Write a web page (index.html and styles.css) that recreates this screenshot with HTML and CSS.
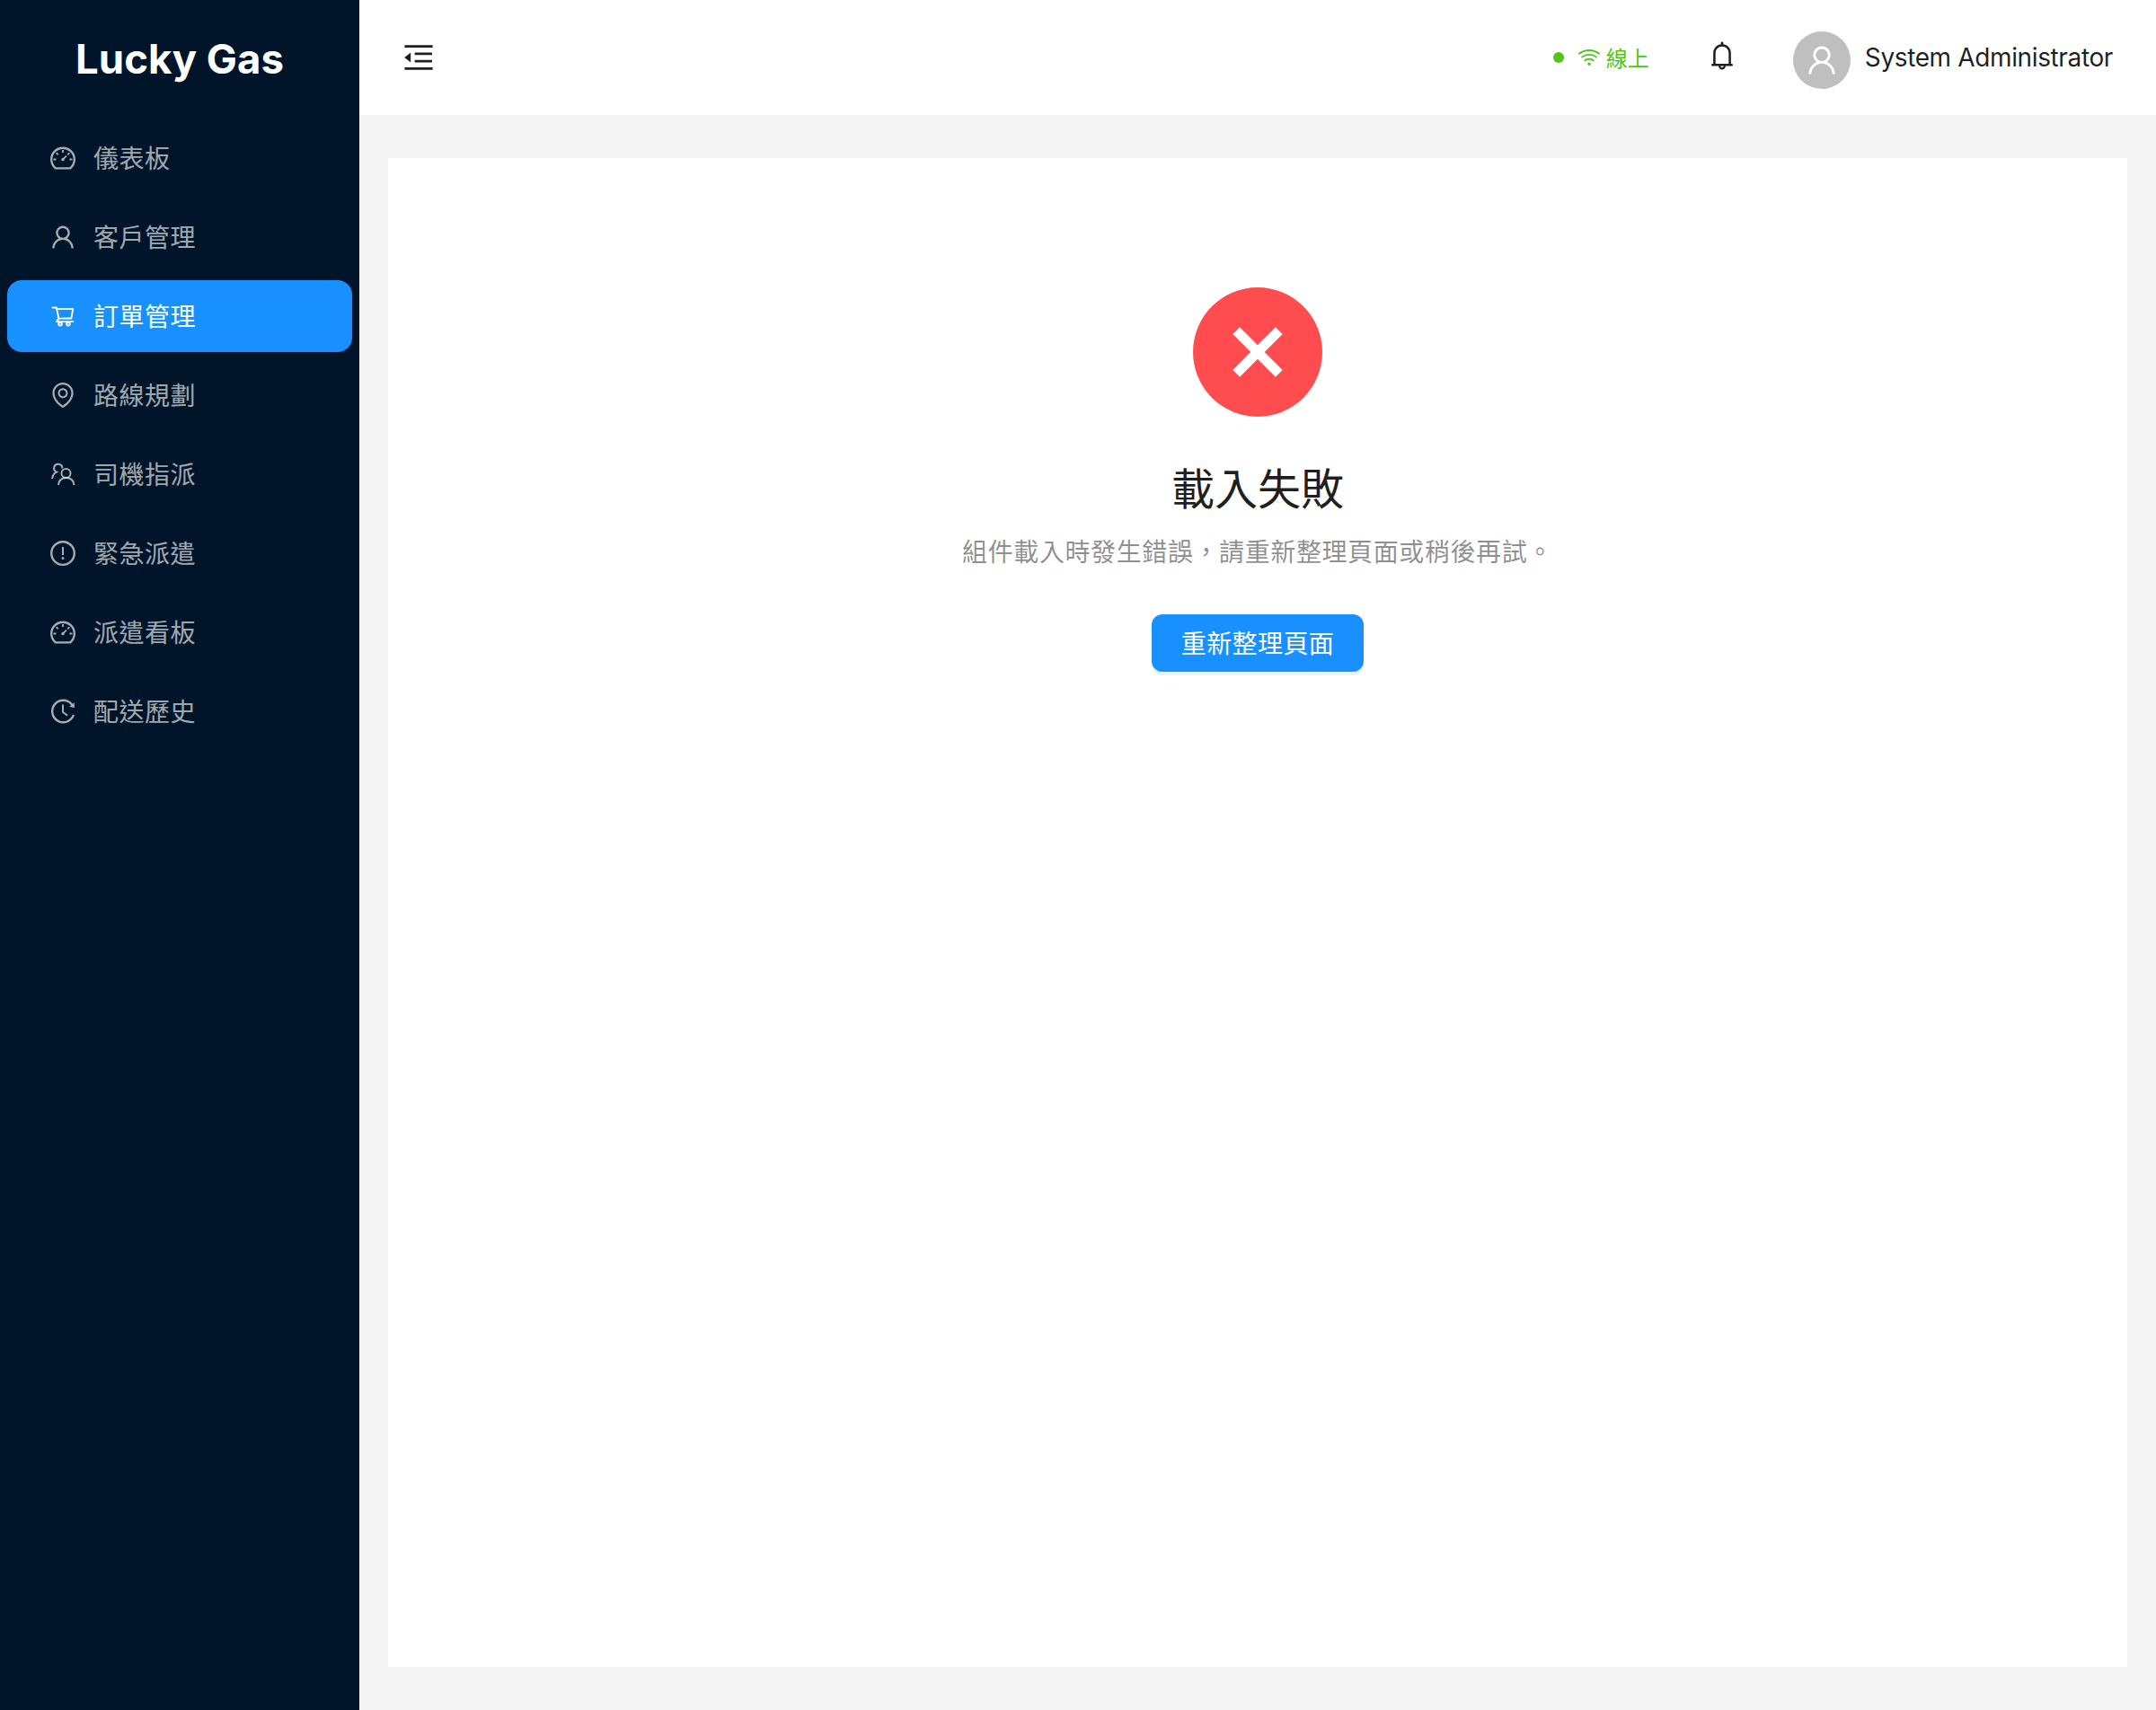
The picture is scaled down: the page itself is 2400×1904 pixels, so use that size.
FILE: index.html
```html
<!DOCTYPE html>
<html lang="zh-Hant">
<head>
    <meta charset="UTF-8">
    <meta name="viewport" content="width=device-width, initial-scale=1.0">
    <title>Lucky Gas</title>
    <link rel="stylesheet" href="styles.css">
</head>
<body>
    <div class="layout">
        <aside class="sider">
            <div class="logo">Lucky Gas</div>
            <nav class="menu">
                <a class="menu-item">
                    <svg class="menu-icon" viewBox="0 0 1024 1024"><path d="M924.8 385.6a446.7 446.7 0 0 0-96-142.4 446.7 446.7 0 0 0-142.4-96C631.1 123.8 572.5 112 512 112s-119.1 11.8-174.4 35.2a446.7 446.7 0 0 0-142.4 96 446.7 446.7 0 0 0-96 142.4C75.8 440.9 64 499.5 64 560c0 132.7 58.3 257.7 159.9 343.1l1.7 1.4c5.8 4.8 13.1 7.5 20.6 7.5h531.7c7.5 0 14.8-2.7 20.6-7.5l1.7-1.4C901.7 817.7 960 692.7 960 560c0-60.5-11.9-119.1-35.2-174.4zM761.4 836H262.6A371.12 371.12 0 0 1 140 560c0-99.4 38.7-192.8 109-263 70.3-70.3 163.7-109 263-109 99.4 0 192.8 38.7 263 109 70.3 70.3 109 163.7 109 263 0 105.6-44.5 205.5-122.6 276zM623.5 421.5a8.03 8.03 0 0 0-11.3 0L527.7 506c-18.7-5-39.4-.2-54.1 14.5a55.95 55.95 0 0 0 0 79.2 55.95 55.95 0 0 0 79.2 0 55.87 55.87 0 0 0 14.5-54.1l84.5-84.5c3.1-3.1 3.1-8.2 0-11.3l-28.3-28.3zM490 320h44c4.4 0 8-3.6 8-8v-80c0-4.4-3.6-8-8-8h-44c-4.4 0-8 3.6-8 8v80c0 4.4 3.6 8 8 8zm260 218v44c0 4.4 3.6 8 8 8h80c4.4 0 8-3.6 8-8v-44c0-4.4-3.6-8-8-8h-80c-4.4 0-8 3.6-8 8zm12.7-197.2l-31.1-31.1a8.03 8.03 0 0 0-11.3 0l-56.6 56.6a8.03 8.03 0 0 0 0 11.3l31.1 31.1c3.1 3.1 8.2 3.1 11.3 0l56.6-56.6c3.1-3.1 3.1-8.2 0-11.3zm-458.6-31.1a8.03 8.03 0 0 0-11.3 0l-31.1 31.1a8.03 8.03 0 0 0 0 11.3l56.6 56.6c3.1 3.1 8.2 3.1 11.3 0l31.1-31.1c3.1-3.1 3.1-8.2 0-11.3l-56.6-56.6zM262 530h-80c-4.4 0-8 3.6-8 8v44c0 4.4 3.6 8 8 8h80c4.4 0 8-3.6 8-8v-44c0-4.4-3.6-8-8-8z"/></svg>
                    <span class="menu-label">儀表板</span>
                </a>
                <a class="menu-item">
                    <svg class="menu-icon" viewBox="0 0 1024 1024"><path d="M858.5 763.6a374 374 0 0 0-80.6-119.5 375.63 375.63 0 0 0-119.5-80.6c-.4-.2-.8-.3-1.2-.5C719.5 518 760 444.7 760 362c0-137-111-248-248-248S264 225 264 362c0 82.7 40.5 156 102.8 201.1-.4.2-.8.3-1.2.5-44.8 18.9-85 46-119.5 80.6a375.63 375.63 0 0 0-80.6 119.5A371.7 371.7 0 0 0 136 901.8a8 8 0 0 0 8 8.2h60c4.4 0 7.9-3.5 8-7.8 2-77.2 33-149.5 87.8-204.3 56.7-56.7 132-87.9 212.2-87.9s155.5 31.2 212.2 87.9C779 752.7 810 825 812 902.2c.1 4.4 3.6 7.8 8 7.8h60a8 8 0 0 0 8-8.2c-1-47.8-10.9-94.3-29.5-138.2zM512 534c-45.9 0-89.1-17.9-121.6-50.4S340 407.9 340 362c0-45.9 17.9-89.1 50.4-121.6S466.1 190 512 190s89.1 17.9 121.6 50.4S684 316.1 684 362c0 45.9-17.9 89.1-50.4 121.6S557.9 534 512 534z"/></svg>
                    <span class="menu-label">客戶管理</span>
                </a>
                <a class="menu-item active">
                    <svg class="menu-icon cart-icon" viewBox="0 0 1024 1024"><path d="M922.9 701.9H327.4l29.9-60.9 496.8-.9c16.8 0 31.2-12 34.2-28.6l68.8-385.1c1.8-10.1-.9-20.5-7.5-28.4a34.99 34.99 0 0 0-26.6-12.5l-632-2.1-5.4-25.4c-3.4-16.2-18-28-34.6-28H96.5a35.3 35.3 0 1 0 0 70.6h125.9L246 312.8l58.1 281.3-74.8 122.1a34.96 34.96 0 0 0-3 36.8c6 11.9 18.1 19.4 31.5 19.4h62.8a102.43 102.43 0 0 0-20.6 61.7c0 56.6 46 102.6 102.6 102.6s102.6-46 102.6-102.6c0-22.3-7.4-44-20.6-61.7h161.1a102.43 102.43 0 0 0-20.6 61.7c0 56.6 46 102.6 102.6 102.6s102.6-46 102.6-102.6c0-22.3-7.4-44-20.6-61.7H923c19.4 0 35.3-15.8 35.3-35.3a35.42 35.42 0 0 0-35.4-35.2zM305.7 253l575.8 1.9-56.4 315.8-452.3.8L305.7 253zm96.9 612.7c-17.4 0-31.6-14.2-31.6-31.6 0-17.4 14.2-31.6 31.6-31.6s31.6 14.2 31.6 31.6a31.6 31.6 0 0 1-31.6 31.6zm325.1 0c-17.4 0-31.6-14.2-31.6-31.6 0-17.4 14.2-31.6 31.6-31.6s31.6 14.2 31.6 31.6a31.6 31.6 0 0 1-31.6 31.6z"/></svg>
                    <span class="menu-label">訂單管理</span>
                </a>
                <a class="menu-item">
                    <svg class="menu-icon" viewBox="0 0 1024 1024"><path d="M854.6 289.1a362.49 362.49 0 0 0-79.9-115.7 370.83 370.83 0 0 0-118.2-77.8C610.7 76.6 562.1 67 512 67c-50.1 0-98.7 9.6-144.5 28.5-44.3 18.3-84 44.5-118.2 77.8A363.6 363.6 0 0 0 169.4 289c-19.5 45-29.4 92.8-29.4 142 0 70.6 16.9 140.9 50.1 208.7 26.7 54.5 64 107.6 111 158.1 80.3 86.2 164.5 138.9 188.4 153a43.9 43.9 0 0 0 22.4 6.1c7.8 0 15.5-2 22.4-6.1 23.9-14.1 108.1-66.8 188.4-153 47-50.4 84.3-103.6 111-158.1C867.1 572 884 501.8 884 431.1c0-49.2-9.9-97-29.4-142zM512 880.2c-65.9-41.9-300-207.8-300-449.1 0-77.9 31.1-151.1 87.6-206.3C356.3 169.5 431.7 139 512 139s155.7 30.5 212.4 85.9C780.9 280 812 353.2 812 431.1c0 241.3-234.1 407.2-300 449.1zm0-617.2c-97.2 0-176 78.8-176 176s78.8 176 176 176 176-78.8 176-176-78.8-176-176-176zm79.2 255.2A111.6 111.6 0 0 1 512 551c-29.9 0-58-11.7-79.2-32.8A111.6 111.6 0 0 1 400 439c0-29.9 11.7-58 32.8-79.2C454 338.6 482.1 327 512 327c29.9 0 58 11.6 79.2 32.8C612.4 381 624 409.1 624 439c0 29.9-11.6 58-32.8 79.2z"/></svg>
                    <span class="menu-label">路線規劃</span>
                </a>
                <a class="menu-item">
                    <svg class="menu-icon team-icon" viewBox="0 0 32 32"><circle cx="19.5" cy="15" r="5"/><path d="M11 28c0-5 3.8-8 8.7-8s8.7 3 8.7 8"/><path d="M15.3 9.5A4.6 4.6 0 1 0 9 13.6C6.4 14.8 4.4 17.6 4 21"/></svg>
                    <span class="menu-label">司機指派</span>
                </a>
                <a class="menu-item">
                    <svg class="menu-icon" viewBox="0 0 1024 1024"><path d="M512 64C264.6 64 64 264.6 64 512s200.6 448 448 448 448-200.6 448-448S759.4 64 512 64zm0 820c-205.4 0-372-166.6-372-372s166.6-372 372-372 372 166.6 372 372-166.6 372-372 372z"/><path d="M464 688a48 48 0 1 0 96 0 48 48 0 1 0-96 0zm24-112h48c4.4 0 8-3.6 8-8V296c0-4.4-3.6-8-8-8h-48c-4.4 0-8 3.6-8 8v272c0 4.4 3.6 8 8 8z"/></svg>
                    <span class="menu-label">緊急派遣</span>
                </a>
                <a class="menu-item">
                    <svg class="menu-icon" viewBox="0 0 1024 1024"><path d="M924.8 385.6a446.7 446.7 0 0 0-96-142.4 446.7 446.7 0 0 0-142.4-96C631.1 123.8 572.5 112 512 112s-119.1 11.8-174.4 35.2a446.7 446.7 0 0 0-142.4 96 446.7 446.7 0 0 0-96 142.4C75.8 440.9 64 499.5 64 560c0 132.7 58.3 257.7 159.9 343.1l1.7 1.4c5.8 4.8 13.1 7.5 20.6 7.5h531.7c7.5 0 14.8-2.7 20.6-7.5l1.7-1.4C901.7 817.7 960 692.7 960 560c0-60.5-11.9-119.1-35.2-174.4zM761.4 836H262.6A371.12 371.12 0 0 1 140 560c0-99.4 38.7-192.8 109-263 70.3-70.3 163.7-109 263-109 99.4 0 192.8 38.7 263 109 70.3 70.3 109 163.7 109 263 0 105.6-44.5 205.5-122.6 276zM623.5 421.5a8.03 8.03 0 0 0-11.3 0L527.7 506c-18.7-5-39.4-.2-54.1 14.5a55.95 55.95 0 0 0 0 79.2 55.95 55.95 0 0 0 79.2 0 55.87 55.87 0 0 0 14.5-54.1l84.5-84.5c3.1-3.1 3.1-8.2 0-11.3l-28.3-28.3zM490 320h44c4.4 0 8-3.6 8-8v-80c0-4.4-3.6-8-8-8h-44c-4.4 0-8 3.6-8 8v80c0 4.4 3.6 8 8 8zm260 218v44c0 4.4 3.6 8 8 8h80c4.4 0 8-3.6 8-8v-44c0-4.4-3.6-8-8-8h-80c-4.4 0-8 3.6-8 8zm12.7-197.2l-31.1-31.1a8.03 8.03 0 0 0-11.3 0l-56.6 56.6a8.03 8.03 0 0 0 0 11.3l31.1 31.1c3.1 3.1 8.2 3.1 11.3 0l56.6-56.6c3.1-3.1 3.1-8.2 0-11.3zm-458.6-31.1a8.03 8.03 0 0 0-11.3 0l-31.1 31.1a8.03 8.03 0 0 0 0 11.3l56.6 56.6c3.1 3.1 8.2 3.1 11.3 0l31.1-31.1c3.1-3.1 3.1-8.2 0-11.3l-56.6-56.6zM262 530h-80c-4.4 0-8 3.6-8 8v44c0 4.4 3.6 8 8 8h80c4.4 0 8-3.6 8-8v-44c0-4.4-3.6-8-8-8z"/></svg>
                    <span class="menu-label">派遣看板</span>
                </a>
                <a class="menu-item">
                    <svg class="menu-icon" viewBox="0 0 1024 1024"><path d="M536.1 273H488c-4.4 0-8 3.6-8 8v275.3c0 2.6 1.2 5 3.3 6.5l165.3 120.7c3.6 2.6 8.6 1.9 11.2-1.7l28.6-39c2.7-3.7 1.9-8.7-1.7-11.2L544.1 528.5V281c0-4.4-3.6-8-8-8zm219.8 75.2l156.8 38.3c5 1.2 9.9-2.6 9.9-7.7l.8-161.5c0-6.7-7.7-10.5-12.9-6.3L752.9 334.1a8 8 0 0 0 3 14.1zm167.7 301.1l-56.7-19.5a8 8 0 0 0-10.1 4.8c-1.9 5.1-3.9 10.1-6 15.1-17.8 42.1-43.3 80-75.9 112.5a353 353 0 0 1-112.5 75.9 352.18 352.18 0 0 1-137.7 27.8c-47.8 0-94.1-9.3-137.7-27.8a353 353 0 0 1-112.5-75.9c-32.5-32.5-58-70.4-75.9-112.5A353.44 353.44 0 0 1 171 512c0-47.8 9.3-94.2 27.8-137.8 17.8-42.1 43.3-80 75.9-112.5a353 353 0 0 1 112.5-75.9C430.6 167.3 477 158 524.8 158s94.1 9.3 137.7 27.8A353 353 0 0 1 775 261.7c10.2 10.3 19.8 21 28.6 32.3l59.8-46.8C784.7 146.6 662.2 81.9 524.6 82 285 82.1 92.6 276.7 95 516.4 97.4 751.9 288.9 942 524.8 942c185.5 0 343.5-117.6 403.7-282.3 1.5-4.2-.7-8.9-4.9-10.4z"/></svg>
                    <span class="menu-label">配送歷史</span>
                </a>
            </nav>
        </aside>
        <div class="main">
            <header class="header">
                <svg class="trigger" viewBox="0 0 1024 1024"><path d="M408 442h480c4.4 0 8-3.6 8-8v-56c0-4.4-3.6-8-8-8H408c-4.4 0-8 3.6-8 8v56c0 4.4 3.6 8 8 8zm-8 204c0 4.4 3.6 8 8 8h480c4.4 0 8-3.6 8-8v-56c0-4.4-3.6-8-8-8H408c-4.4 0-8 3.6-8 8v56zm504-486H120c-4.4 0-8 3.6-8 8v56c0 4.4 3.6 8 8 8h784c4.4 0 8-3.6 8-8v-56c0-4.4-3.6-8-8-8zm0 632H120c-4.4 0-8 3.6-8 8v56c0 4.4 3.6 8 8 8h784c4.4 0 8-3.6 8-8v-56c0-4.4-3.6-8-8-8zM115.4 518.9L271.7 642c5.8 4.6 14.4.5 14.4-6.9V388.9c0-7.4-8.5-11.5-14.4-6.9L115.4 505.1a8.74 8.74 0 0 0 0 13.8z"/></svg>
                <div class="header-right">
                    <div class="status">
                        <span class="status-dot"></span>
                        <svg class="status-icon" viewBox="0 0 1024 1024"><path d="M723 620.5C666.8 571.6 593.4 542 513 542s-153.8 29.6-210.1 78.6a8.1 8.1 0 0 0-.8 11.2l36 42.9c2.9 3.4 8 3.8 11.4.9C393.1 637.2 450.3 614 513 614s119.9 23.2 163.5 61.5c3.4 2.9 8.5 2.5 11.4-.9l36-42.9c2.8-3.3 2.4-8.3-.9-11.2zm117.4-140.1C751.7 406.5 637.6 362 513 362s-238.7 44.5-327.5 118.4a8.05 8.05 0 0 0-1 11.3l36 42.9c2.8 3.4 7.9 3.8 11.2 1C308 472.2 406.1 434 513 434s205 38.2 281.2 101.6c3.4 2.8 8.4 2.4 11.2-1l36-42.9c2.8-3.4 2.4-8.5-1-11.3zm116.7-139C835.7 241.8 680.3 182 511 182c-168.2 0-322.6 59-443.7 157.4a8 8 0 0 0-1.1 11.4l36 42.9c2.8 3.3 7.8 3.8 11.1 1.1C222 306.7 360.3 254 511 254c151.8 0 291 53.5 400 142.7 3.4 2.8 8.4 2.3 11.2-1.1l36-42.9c2.9-3.4 2.4-8.5-1.1-11.3zM448 778a64 64 0 1 0 128 0 64 64 0 1 0-128 0z"/></svg>
                        <span class="status-text">線上</span>
                    </div>
                    <svg class="bell" viewBox="0 0 1024 1024"><path d="M816 768h-24V428c0-141.1-104.3-257.7-240-277.1V112c0-22.1-17.9-40-40-40s-40 17.9-40 40v38.9c-135.7 19.4-240 136-240 277.1v340h-24c-17.7 0-32 14.3-32 32v32c0 4.4 3.6 8 8 8h216c0 61.8 50.2 112 112 112s112-50.2 112-112h216c4.4 0 8-3.6 8-8v-32c0-17.7-14.3-32-32-32zM512 888c-26.5 0-48-21.5-48-48h96c0 26.5-21.5 48-48 48zM304 768V428c0-55.6 21.6-107.8 60.9-147.1S456.4 220 512 220c55.6 0 107.8 21.6 147.1 60.9S720 372.4 720 428v340H304z"/></svg>
                    <div class="user">
                        <span class="avatar">
                            <svg class="avatar-icon" viewBox="0 0 1024 1024"><path d="M858.5 763.6a374 374 0 0 0-80.6-119.5 375.63 375.63 0 0 0-119.5-80.6c-.4-.2-.8-.3-1.2-.5C719.5 518 760 444.7 760 362c0-137-111-248-248-248S264 225 264 362c0 82.7 40.5 156 102.8 201.1-.4.2-.8.3-1.2.5-44.8 18.9-85 46-119.5 80.6a375.63 375.63 0 0 0-80.6 119.5A371.7 371.7 0 0 0 136 901.8a8 8 0 0 0 8 8.2h60c4.4 0 7.9-3.5 8-7.8 2-77.2 33-149.5 87.8-204.3 56.7-56.7 132-87.9 212.2-87.9s155.5 31.2 212.2 87.9C779 752.7 810 825 812 902.2c.1 4.4 3.6 7.8 8 7.8h60a8 8 0 0 0 8-8.2c-1-47.8-10.9-94.3-29.5-138.2zM512 534c-45.9 0-89.1-17.9-121.6-50.4S340 407.9 340 362c0-45.9 17.9-89.1 50.4-121.6S466.1 190 512 190s89.1 17.9 121.6 50.4S684 316.1 684 362c0 45.9-17.9 89.1-50.4 121.6S557.9 534 512 534z"/></svg>
                        </span>
                        <span class="user-name">System Administrator</span>
                    </div>
                </div>
            </header>
            <main class="content">
                <section class="card">
                    <svg class="result-icon" viewBox="0 0 144 144"><circle class="result-disc" cx="72" cy="72" r="72"/><path class="result-cross" d="M48.2 48.2L95.8 95.8M95.8 48.2L48.2 95.8"/></svg>
                    <h1 class="result-title">載入失敗</h1>
                    <p class="result-text">組件載入時發生錯誤，請重新整理頁面或稍後再試。</p>
                    <button class="btn-primary" type="button">重新整理頁面</button>
                </section>
            </main>
        </div>
    </div>
</body>
</html>
```

FILE: styles.css
```css
body {
    font-family: 'Inter', 'Noto Sans CJK TC', sans-serif;
    margin: 0;
    padding: 0;
    background-color: #F5F5F5;
    color: rgba(0, 0, 0, 0.88);
}
svg {
    fill: currentColor;
    flex-shrink: 0;
    display: block;
}
.layout {
    display: flex;
    height: 1904px;
}
.sider {
    width: 400px;
    flex-shrink: 0;
    background: #001529;
}
.logo {
    height: 128px;
    padding-top: 2px;
    box-sizing: border-box;
    display: flex;
    align-items: center;
    justify-content: center;
    color: #FFFFFF;
    font-size: 45.5px;
    font-weight: 700;
}
.menu {
    display: flex;
    flex-direction: column;
    gap: 8px;
    padding: 8px;
}
.menu-item {
    height: 80px;
    display: flex;
    align-items: center;
    gap: 18px;
    padding-left: 46px;
    border-radius: 16px;
    color: rgba(255, 255, 255, 0.65);
    font-size: 28px;
}
.menu-item.active {
    background: #1890FF;
    color: #FFFFFF;
}
.menu-label {
    letter-spacing: 0.5px;
    padding-bottom: 3px;
}
.menu-icon {
    width: 32px;
    height: 32px;
}
.cart-icon {
    width: 28px;
    height: 28px;
    margin: 0 2px;
}
.team-icon {
    fill: none;
    stroke: currentColor;
    stroke-width: 2;
}
.main {
    flex: 1;
    display: flex;
    flex-direction: column;
}
.header {
    height: 128px;
    flex-shrink: 0;
    background: #FFFFFF;
    display: flex;
    align-items: center;
    justify-content: space-between;
    padding: 0 48px 0 46px;
}
.trigger {
    width: 40px;
    height: 40px;
}
.header-right {
    display: flex;
    align-items: center;
}
.status {
    display: flex;
    align-items: center;
    color: #52C41A;
    font-size: 24px;
}
.status-dot {
    width: 12px;
    height: 12px;
    border-radius: 50%;
    background: #52C41A;
    margin-right: 14px;
}
.status-icon {
    width: 28px;
    height: 28px;
    margin-right: 5px;
}
.status-text {
    padding-bottom: 2px;
}
.bell {
    width: 36px;
    height: 36px;
    margin: -4px 0 0 63px;
}
.user {
    display: flex;
    align-items: center;
    gap: 16px;
    margin-left: 61px;
}
.avatar {
    width: 64px;
    height: 64px;
    border-radius: 50%;
    background: #BFBFBF;
    color: #FFFFFF;
    display: flex;
    align-items: center;
    justify-content: center;
    margin-top: 6px;
}
.avatar-icon {
    width: 40px;
    height: 40px;
}
.user-name {
    font-size: 28px;
    letter-spacing: -0.37px;
}
.content {
    flex: 1;
    padding: 48px 32px;
    display: flex;
}
.card {
    flex: 1;
    background: #FFFFFF;
    display: flex;
    flex-direction: column;
    align-items: center;
    padding-top: 144px;
}
.result-icon {
    width: 144px;
    height: 144px;
}
.result-disc {
    fill: #FF4D4F;
}
.result-cross {
    fill: none;
    stroke: #FFFFFF;
    stroke-width: 11;
}
.result-title {
    margin: 49px 0 0;
    font-size: 48px;
    font-weight: 400;
    line-height: 64px;
}
.result-text {
    margin: 16px 0 0;
    font-size: 28px;
    line-height: 44px;
    letter-spacing: 0.6px;
    color: rgba(0, 0, 0, 0.45);
}
.btn-primary {
    margin-top: 47px;
    height: 64px;
    width: 236px;
    padding: 0 0 2px;
    border: none;
    border-radius: 12px;
    background: #1890FF;
    color: #FFFFFF;
    font-family: inherit;
    font-size: 28px;
    letter-spacing: 0.4px;
    box-shadow: 0 4px 0 rgba(5, 145, 255, 0.1);
}
```
